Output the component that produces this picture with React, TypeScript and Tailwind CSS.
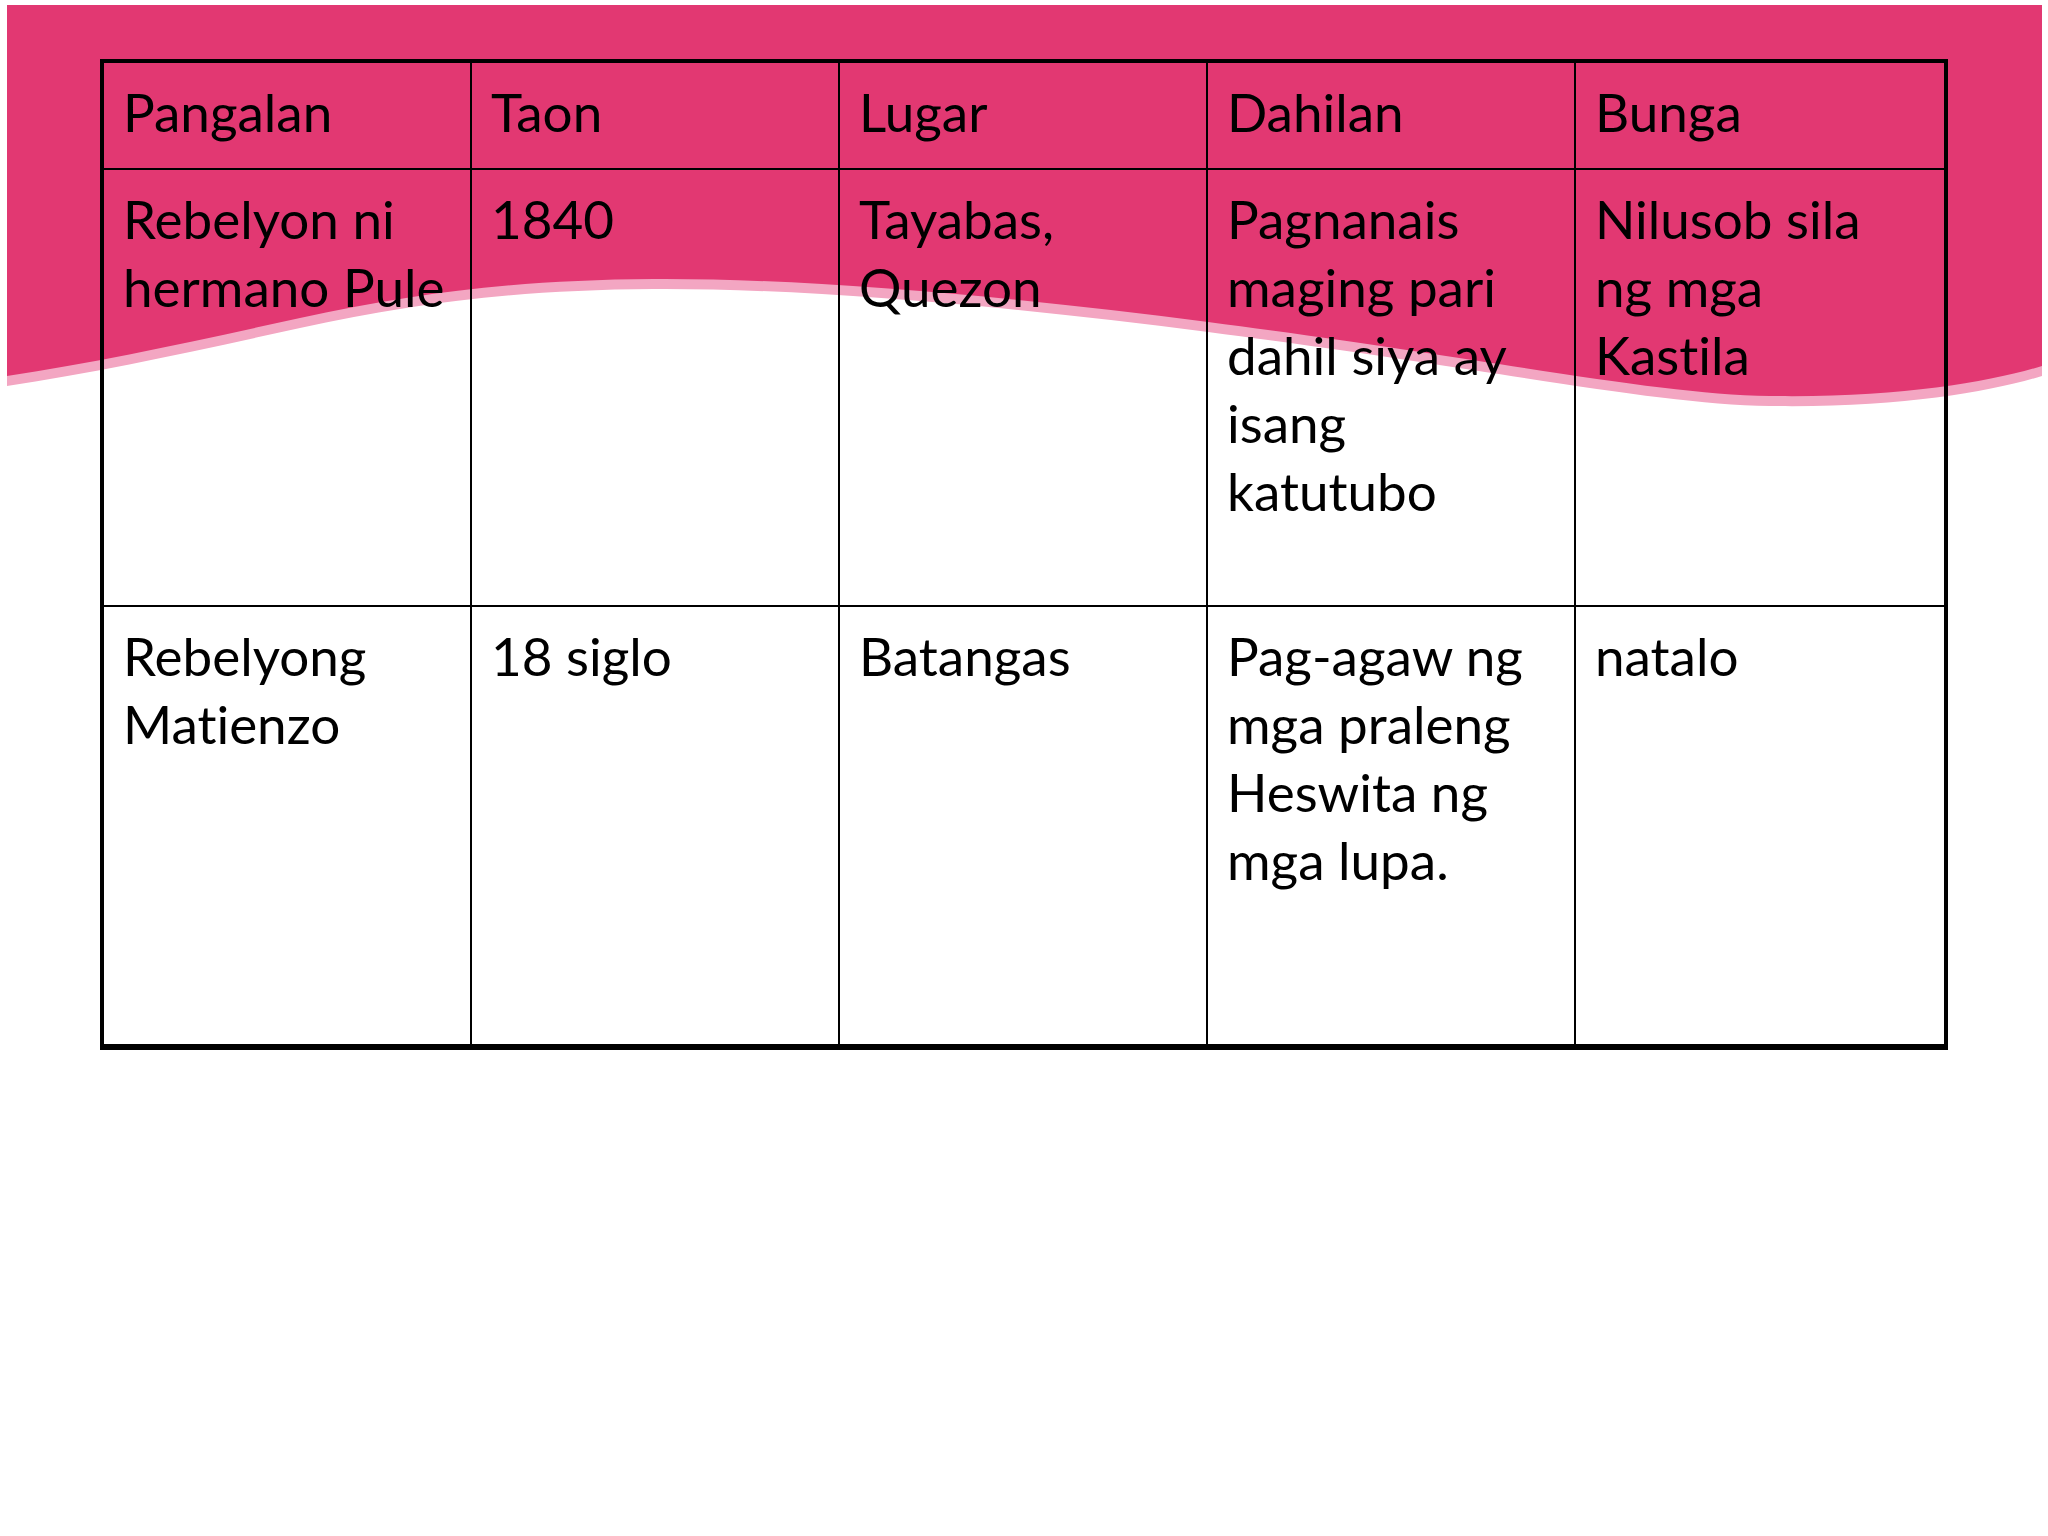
import React from "react";

const rows: string[][][] = [
  [["Pangalan"], ["Taon"], ["Lugar"], ["Dahilan"], ["Bunga"]],
  [
    ["Rebelyon ni", "hermano Pule"],
    ["1840"],
    ["Tayabas,", "Quezon"],
    ["Pagnanais", "maging pari", "dahil siya ay", "isang", "katutubo"],
    ["Nilusob sila", "ng mga", "Kastila"],
  ],
  [
    ["Rebelyong", "Matienzo"],
    ["18 siglo"],
    ["Batangas"],
    ["Pag-agaw ng", "mga praleng", "Heswita ng", "mga lupa."],
    ["natalo"],
  ],
];

function Wave() {
  const d =
    "M7 5 H2042 V366 C1990 382 1900 398 1770 396 C1650 394 1500 360 1208 322 C1000 295 800 278 653 279 C520 280 420 292 300 318 C200 340 100 362 7 376 Z";
  return (
    <svg className="absolute inset-0" width="2048" height="1536" viewBox="0 0 2048 1536">
      <path d={d} fill="#f3a6c2" transform="translate(0 10)" />
      <path d={d} fill="#e23872" />
    </svg>
  );
}

export default function App() {
  return (
    <div className="relative w-[2048px] h-[1536px] bg-white overflow-hidden" style={{ fontFamily: "Lato, 'Open Sans', sans-serif" }}>
      <Wave />
      <div className="relative z-10 pt-[59px] pl-[100px]">
        <div className="w-[1848px] border-x-4 border-t-4 border-b-[6px] border-black grid grid-cols-5 grid-rows-[107px_437px_437px]">
          {rows.map((row, ri) =>
            row.map((cell, ci) => (
              <div
                key={ri + "-" + ci}
                className={
                  "pl-[19px] pt-[15px] text-[53px] leading-[68px] text-black whitespace-nowrap [font-variant-ligatures:none] border-black " +
                  (ci < 4 ? "border-r-2 " : "") +
                  (ri < 2 ? "border-b-2" : "")
                }
              >
                {cell.map((line, li) => (
                  <div key={li}>{line}</div>
                ))}
              </div>
            ))
          )}
        </div>
      </div>
    </div>
  );
}
